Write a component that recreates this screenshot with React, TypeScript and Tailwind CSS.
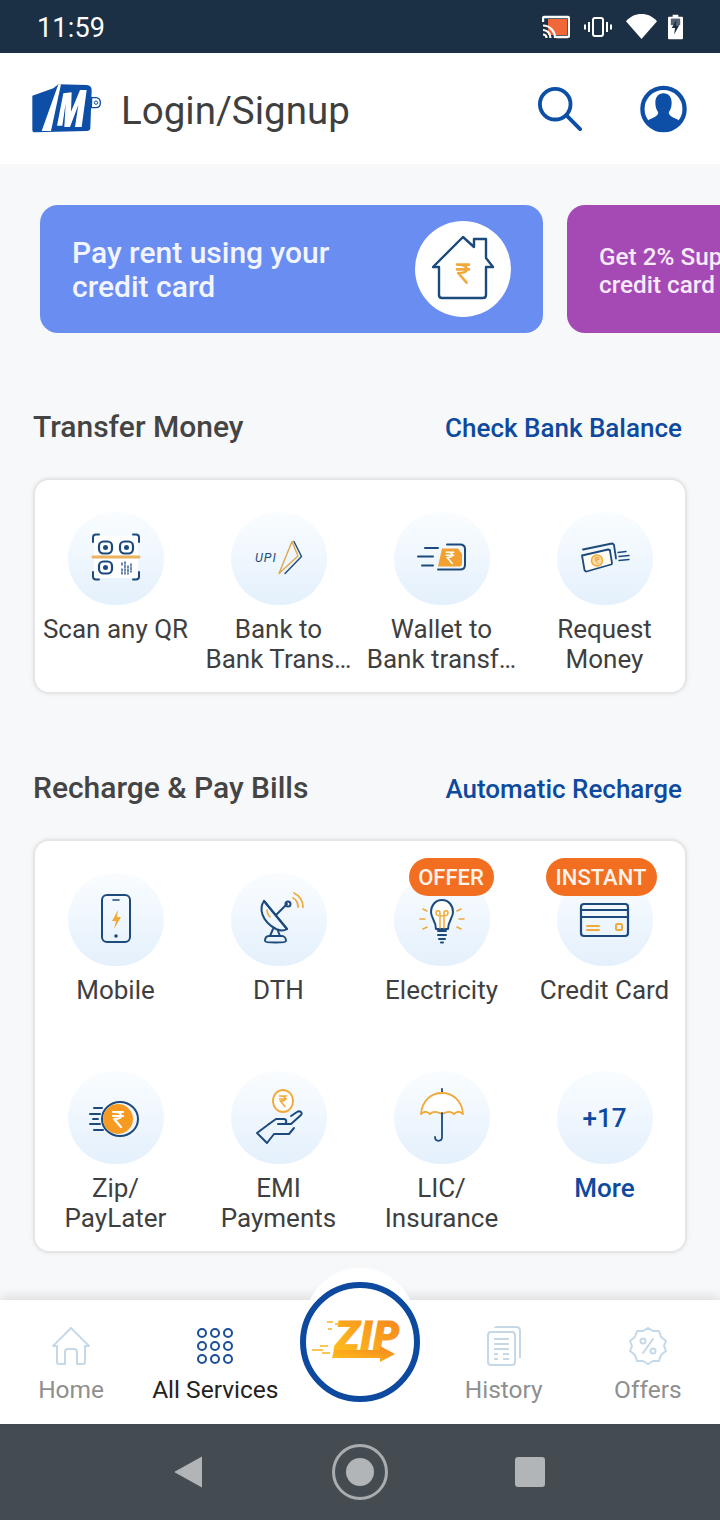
import type { ReactNode } from 'react';

const NAVY = '#1d4a7c';
const AMBER = '#f0a93a';

// Small rupee glyph drawn with strokes, used inside the service icons
function Rupee({ x, y, s = 1, color = AMBER, w = 2 }: { x: number; y: number; s?: number; color?: string; w?: number }) {
  return (
    <path
      transform={`translate(${x} ${y}) scale(${s})`}
      d="M-5 -7H5M-5 -3H5M-3 -7C2 -7 3 -5 3 -3C3 -1 1 0 -4 0L3 8"
      fill="none"
      stroke={color}
      strokeWidth={w / s}
      strokeLinecap="round"
      strokeLinejoin="round"
    />
  );
}

function StatusBar() {
  return (
    <div className="h-[53px] shrink-0 bg-[#1b2f45] flex items-center justify-between pl-[37px] pr-[36px]">
      <span className="pt-[3px] text-[27px] leading-none font-normal text-white tracking-[0.2px]">11:59</span>
      <div className="flex items-center">
        {/* cast */}
        <svg width="28" height="24" viewBox="0 0 28 24" fill="none">
          <rect x="6" y="4" width="19" height="16" fill="#f0683a" />
          <path d="M1 7V3.500C1 2.500 1.500 2 2.500 2H25.500C26.500 2 27 2.500 27 3.500V20.500C27 21.500 26.500 22 25.500 22H14" stroke="#fff" strokeWidth="2.400" />
          <path d="M1 10.500C7.500 10.500 13 16 13 23M1 15C5 15 8.500 18.500 8.500 23M1 19.500C3 19.500 4.500 21 4.500 23" stroke="#fff" strokeWidth="2.200" />
        </svg>
        {/* vibrate */}
        <svg className="ml-[14px]" width="28" height="20" viewBox="0 0 28 20" fill="none" stroke="#fff">
          <rect x="9" y="1" width="10" height="18" rx="2" strokeWidth="2" />
          <path d="M5 5V15M1 7.500V12.500M23 5V15M27 7.500V12.500" strokeWidth="2" />
        </svg>
        {/* wifi */}
        <svg className="ml-[14px]" width="31" height="25" viewBox="0 0 30 24">
          <path d="M0 7C4 2.500 9 0 15 0C21 0 26 2.500 30 7L15 24Z" fill="#fff" />
        </svg>
        {/* charging battery */}
        <svg className="ml-[11px] mr-[1px]" width="15" height="26" viewBox="0 0 16 26">
          <path d="M5 0H11V2H15C15.600 2 16 2.400 16 3V25C16 25.600 15.600 26 15 26H1C0.400 26 0 25.600 0 25V3C0 2.400 0.400 2 1 2H5Z" fill="#fff" />
          <path d="M3 4H13V11H3Z" fill="#1b2f45" opacity="0.75" />
          <path d="M9 5L4 14H7.500L6.500 21L12 11H8.500Z" fill="#1b2f45" />
        </svg>
      </div>
    </div>
  );
}

function Header() {
  return (
    <header className="h-[111px] shrink-0 bg-white flex items-center pl-[25px] pr-[33px]">
      <svg width="90" height="65" viewBox="0 0 270 195" className="-mt-[2px]">
        <path d="M22 62L85 40L100 28L185 30Q200 32 200 45L196 160Q195 168 185 168L30 172Q22 172 22 165Z" fill="#0d4ea6" />
        <path d="M50 168L100 28L108 28L78 168Z" fill="#fff" />
        <path d="M96 152L115 55L140 52L138 110L165 45L185 45L170 156L150 156L160 90L135 156L118 156L122 85L112 152Z" fill="#fff" />
        <path d="M200 68H214Q226 70 226 83Q226 98 212 98H199Z" fill="#fff" stroke="#0d4ea6" strokeWidth="4" />
        <circle cx="213" cy="83" r="5" fill="none" stroke="#0d4ea6" strokeWidth="3" />
      </svg>
      <span className="ml-[6px] mt-[5px] text-[38.500px] leading-none text-[#3f3f3f] font-normal">Login/Signup</span>
      <svg className="ml-auto" width="44" height="44" viewBox="0 0 46 46" fill="none" stroke="#0d4ea6" strokeLinecap="round">
        <ellipse cx="18" cy="18" rx="16" ry="16" strokeWidth="4" />
        <path d="M30 30L44 44" strokeWidth="4" />
      </svg>
      <svg className="ml-[58px]" width="47" height="48" viewBox="0 0 49 49">
        <circle cx="24.500" cy="24.500" r="22" fill="#fff" stroke="#0d4ea6" strokeWidth="4.500" />
        <path
          d="M24.500 8C30 8 33 12 33 18C33 22 32 25 30 28C30 31 33 33 38 35C41 36 41 37 40 38C36 43 30 46 24.500 46C19 46 13 43 9 38C8 37 8 36 11 35C16 33 19 31 19 28C17 25 16 22 16 18C16 12 19 8 24.500 8Z"
          fill="#0d4ea6"
        />
      </svg>
    </header>
  );
}

function Banners() {
  return (
    <div className="mt-[41px] flex gap-[24px] pl-[40px] overflow-hidden">
      <div className="w-[503px] h-[128px] shrink-0 rounded-[18px] bg-[#6a8df2] flex items-center justify-between pl-[32px] pr-[32px]">
        <p className="pt-[2px] text-[30px] leading-[34px] font-medium text-[#f2f5ff]">
          Pay rent using your
          <br />
          credit card
        </p>
        <div className="w-[96px] h-[96px] rounded-full bg-white flex items-center justify-center">
          <svg width="64" height="66" viewBox="0 -2 64 66" fill="none">
            <path
              d="M2 29L32 -1L43 9V1H55V20L62 29H55V57C55 59 54 60 52 60H11C9 60 8 59 8 57V29Z"
              stroke={NAVY}
              strokeWidth="2.400"
              strokeLinejoin="round"
            />
            <Rupee x={32} y={35} s={1.200} w={2.600} />
          </svg>
        </div>
      </div>
      <div className="w-[503px] h-[128px] shrink-0 rounded-[18px] bg-[#a549b4] flex items-center pl-[32px]">
        <p className="pt-[4px] text-[24.300px] leading-[28px] font-medium text-[#f7eafa] whitespace-nowrap">
          Get 2% Super Cash on
          <br />
          credit card
        </p>
      </div>
    </div>
  );
}

function SectionHead({ title, action, top }: { title: string; action: string; top: string }) {
  return (
    <div className={`${top} h-[40px] px-[33px] flex items-center justify-between`}>
      <h2 className="mt-[1px] text-[30px] leading-none font-medium text-[#444]">{title}</h2>
      <a className="text-[26px] leading-none font-medium text-[#0d4a9f] mt-[4px] mr-[5px]">{action}</a>
    </div>
  );
}

interface Service {
  label: ReactNode;
  icon: ReactNode;
  badge?: { text: string; pos: string };
  more?: boolean;
}

function IconBox({ children }: { children: ReactNode }) {
  return (
    <svg width="64" height="64" viewBox="0 0 64 64" fill="none" strokeLinecap="round" strokeLinejoin="round">
      {children}
    </svg>
  );
}

const transferServices: Service[] = [
  {
    label: 'Scan any QR',
    icon: (
      <IconBox>
        <rect x="10" y="9" width="44" height="42" fill="#fff" />
        <path d="M9 15V10.500C9 8.500 10 7.500 12 7.500H15M49 7.500H52C54 7.500 55 8.500 55 10.500V15M9 45V49.500C9 51.500 10 52.500 12 52.500H15M49 52.500H52C54 52.500 55 51.500 55 49.500V45" stroke={NAVY} strokeWidth="2" />
        <rect x="15" y="14.500" width="13" height="12" rx="4.500" stroke={NAVY} strokeWidth="2.200" />
        <rect x="36" y="14.500" width="13" height="12" rx="4.500" stroke={NAVY} strokeWidth="2.200" />
        <rect x="15" y="34.500" width="13" height="12" rx="4.500" stroke={NAVY} strokeWidth="2.200" />
        <circle cx="21.500" cy="20.500" r="2.500" fill={NAVY} />
        <circle cx="42.500" cy="20.500" r="2.500" fill={NAVY} />
        <circle cx="21.500" cy="40.500" r="2.500" fill={NAVY} />
        <path d="M9 30H55" stroke="#ecb45f" strokeWidth="3" />
        <path d="M38 36V38M41 35V47M44 39V47M47 37V45M38 42V47" stroke={NAVY} strokeWidth="1.300" strokeDasharray="2 1.500" />
      </IconBox>
    ),
  },
  {
    label: (
      <>
        Bank to
        <br />
        Bank Trans…
      </>
    ),
    icon: (
      <IconBox>
        <text x="8" y="35" fontFamily="Roboto, sans-serif" fontStyle="italic" fontSize="12.500" fontWeight="400" fill={NAVY} letterSpacing="1">
          UPI
        </text>
        <path d="M45 14.500L32 46.500L51 29Z" stroke="#e0a64f" strokeWidth="1.400" />
        <path d="M47 14.500L54.500 29.500L38 46.500" stroke={NAVY} strokeWidth="1.400" />
      </IconBox>
    ),
  },
  {
    label: (
      <>
        Wallet to
        <br />
        Bank transf…
      </>
    ),
    icon: (
      <IconBox>
        <path d="M37 17.500H50C53.500 17.500 55 19.500 55 22V38C55 41 53.500 42.500 50 42.500H28" stroke={NAVY} strokeWidth="2" />
        <path d="M32 21.500H48L52 27V36C52 38 51 39.500 49 39.500H28Z" fill="#f3a12e" />
        <Rupee x={40} y={30.500} s={0.750} color="#fff" w={1.600} />
        <path d="M15 21H28M8 29.500H23M12 38.500H23" stroke={NAVY} strokeWidth="2" />
      </IconBox>
    ),
  },
  {
    label: (
      <>
        Request
        <br />
        Money
      </>
    ),
    icon: (
      <IconBox>
        <path d="M10 22.500L39 16.500C40 16.500 40.500 17 41 18L43 31.500" stroke={NAVY} strokeWidth="1.800" />
        <path d="M9 28.500L35 22.500C36.500 22.500 37 23 37 24L39 36C39 37 38.500 37.500 38 37.500L13.500 44.500C12.500 44.500 12 44 11.500 43Z" fill="#fffdf3" stroke={NAVY} strokeWidth="1.800" />
        <circle cx="24" cy="33.500" r="5.500" fill="#f9dda8" stroke={AMBER} strokeWidth="1.400" />
        <Rupee x={24} y={33.500} s={0.400} w={1} />
        <path d="M45 25.500L53 24.500M46 29.500L56 28.500M46 33.500L56 32.500" stroke={NAVY} strokeWidth="1.400" />
      </IconBox>
    ),
  },
];

const billServices: Service[] = [
  {
    label: 'Mobile',
    icon: (
      <IconBox>
        <rect x="18" y="7" width="28" height="47" rx="5" stroke={NAVY} strokeWidth="2" />
        <path d="M29 12H35" stroke={NAVY} strokeWidth="1.600" />
        <circle cx="32" cy="48" r="1.800" fill={NAVY} />
        <path d="M34 22L28 33H32L30 41L37 29H33Z" fill={AMBER} />
      </IconBox>
    ),
  },
  {
    label: 'DTH',
    icon: (
      <IconBox>
        <path d="M17 13C12 20 14 33 29 41C33 43 37 43 40 41Z" stroke={NAVY} strokeWidth="2" />
        <path d="M17 13L40 41" stroke={NAVY} strokeWidth="2" />
        <path d="M29 27L40 16" stroke={NAVY} strokeWidth="2" />
        <circle cx="41" cy="16" r="2.500" stroke={NAVY} strokeWidth="2" />
        <path d="M46 10C50 12 51 15 51 19M47 5C53 8 56 13 56 19" stroke={AMBER} strokeWidth="1.800" />
        <path d="M26 41L23 48H33L31 43M18 53C18 50 19 48 22 48H35C37 48 39 50 39 53C39 55 18 55 18 53Z" stroke={NAVY} strokeWidth="2" />
        <path d="M20 22C20 25 21 27 23 29" stroke={AMBER} strokeWidth="1.500" />
      </IconBox>
    ),
  },
  {
    label: 'Electricity',
    badge: { text: 'OFFER', pos: 'left-[15px] w-[85px]' },
    icon: (
      <IconBox>
        <path d="M32 12C25 12 21 18 21 24C21 30 26 33 26 41H38C38 33 43 30 43 24C43 18 39 12 32 12Z" fill="#fff" stroke={NAVY} strokeWidth="2" />
        <path d="M28 43H36M28 47H36M29 51H35M31 54.500H33" stroke={NAVY} strokeWidth="2" />
        <path d="M30 40V25C30 22 26 22 26 25C26 27 28 28 32 28C36 28 38 27 38 25C38 22 34 22 34 25V40" stroke={AMBER} strokeWidth="1.500" />
        <path d="M13 21L17 23M10 31H15M13 41L17 39M51 21L47 23M54 31H49M51 41L47 39" stroke={AMBER} strokeWidth="1.600" />
      </IconBox>
    ),
  },
  {
    label: 'Credit Card',
    badge: { text: 'INSTANT', pos: '-left-[11px] w-[111px]' },
    icon: (
      <IconBox>
        <rect x="8" y="16" width="47" height="32" rx="3" stroke={NAVY} strokeWidth="2.200" />
        <path d="M8 22H55M8 29H55" stroke={NAVY} strokeWidth="2.200" />
        <path d="M14 38H26M14 42H26" stroke={AMBER} strokeWidth="1.800" />
        <rect x="43" y="36" width="6" height="6" rx="1.500" stroke={AMBER} strokeWidth="2" />
      </IconBox>
    ),
  },
  {
    label: (
      <>
        Zip/
        <br />
        PayLater
      </>
    ),
    icon: (
      <IconBox>
        <ellipse cx="36" cy="33" rx="18" ry="17" stroke={NAVY} strokeWidth="2" />
        <circle cx="34" cy="33" r="15" fill="#f79a22" />
        <Rupee x={34} y={33} s={1} color="#fff" w={2.200} />
        <path d="M10 22H18M6 28H16M9 33H14M6 38H16M10 44H19" stroke={NAVY} strokeWidth="2" />
      </IconBox>
    ),
  },
  {
    label: (
      <>
        EMI
        <br />
        Payments
      </>
    ),
    icon: (
      <IconBox>
        <ellipse cx="36" cy="15" rx="10" ry="11" fill="#fff" stroke={AMBER} strokeWidth="1.800" />
        <Rupee x={36} y={15} s={0.700} w={1.500} />
        <path d="M22 38L29 33H37C40 33 40 38 37 38H31M37 38H44L54 29C56 27 53 24 50 26L44 30" stroke={NAVY} strokeWidth="2" />
        <path d="M22 38L10 47L20 57L27 48H42L47 42" stroke={NAVY} strokeWidth="2" />
      </IconBox>
    ),
  },
  {
    label: (
      <>
        LIC/
        <br />
        Insurance
      </>
    ),
    icon: (
      <IconBox>
        <path d="M32 3V7" stroke={NAVY} strokeWidth="1.800" />
        <path d="M11 28C12 15 21 7 32 7C43 7 52 15 53 28C50 25 47 25 44 28C41 25 38 25 32 28C26 25 23 25 20 28C17 25 14 25 11 28Z" fill="#fff" stroke={AMBER} strokeWidth="1.800" />
        <path d="M32 27V51C32 56 25 56 25 51" stroke={NAVY} strokeWidth="1.800" />
      </IconBox>
    ),
  },
  {
    label: 'More',
    more: true,
    icon: <span className="text-[26px] leading-none font-medium text-[#0d4a9f]">+17</span>,
  },
];

function ServiceCell({ service }: { service: Service }) {
  return (
    <div className="flex flex-col items-center">
      <div className="relative w-[96px] h-[93px] rounded-full bg-gradient-to-b from-[#fafdff] to-[#e4f0fc] flex items-center justify-center">
        {service.icon}
        {service.badge && (
          <span className={`absolute -top-[15px] ${service.badge.pos} h-[38px] pt-[2px] rounded-full bg-[#f26f21] flex items-center justify-center text-[22px] leading-none font-medium text-[#fdf3ea]`}>
            {service.badge.text}
          </span>
        )}
      </div>
      <div className={`mt-[9px] text-center text-[26px] leading-[30px] whitespace-nowrap ${service.more ? 'font-medium text-[#0d4a9f]' : 'text-[#3f3f3f]'}`}>
        {service.label}
      </div>
    </div>
  );
}

function ServiceCard({ services, top, rowClass }: { services: Service[]; top: string; rowClass: string }) {
  return (
    <div className={`${top} mx-[33px] rounded-[16px] border-2 border-[#e6e6e6] bg-white pt-[32px] pb-[18px] shadow-[0_0_4px_rgba(0,0,0,0.08)]`}>
      <div className={`-ml-[1px] grid grid-cols-[repeat(4,163px)] ${rowClass}`}>
        {services.map((service, i) => (
          <ServiceCell key={i} service={service} />
        ))}
      </div>
    </div>
  );
}

function NavItem({ label, active, children }: { label: string; active?: boolean; children: ReactNode }) {
  return (
    <div className="flex flex-col items-center pt-[26px]">
      <div className="h-[40px] flex items-center justify-center">{children}</div>
      <span className={`mt-[10px] text-[24.500px] leading-[28px] whitespace-nowrap ${active ? 'text-[#222]' : 'text-[#8f8f8f]'}`}>{label}</span>
    </div>
  );
}

const PALE = '#c5d8e8';

function ZipButton() {
  return (
    <div className="absolute left-[300px] -top-[18px] w-[120px] h-[120px] rounded-full bg-white border-[6px] border-[#0d4a9f] flex items-center justify-center">
      <svg width="96" height="52" viewBox="0 0 96 52" className="overflow-visible">
        <defs>
          <linearGradient id="zipFill" x1="0" y1="1" x2="1" y2="0">
            <stop offset="0" stopColor="#ffc21a" />
            <stop offset="1" stopColor="#f5841f" />
          </linearGradient>
        </defs>
        <text x="23" y="34" fontFamily="Roboto, sans-serif" fontStyle="italic" fontWeight="900" fontSize="41" letterSpacing="1" fill="url(#zipFill)" stroke="url(#zipFill)" strokeWidth="1">
          ZIP
        </text>
        <path d="M22 34H68V30L83 38L68 46V42H20Z" fill="url(#zipFill)" />
        <path d="M15 6H21M23 8H28M16 13H20M8 30H16M0 34H11M10 37H18" stroke="#f5b21f" strokeWidth="1.600" />
      </svg>
    </div>
  );
}

function BottomNav() {
  const dots = Array.from({ length: 9 });
  return (
    <nav className="relative h-[124px] shrink-0 bg-white shadow-[0_-4px_10px_rgba(0,0,0,0.1)]">
      {/* raised white notch behind the Zip button */}
      <div className="absolute left-[305px] -top-[32px] w-[110px] h-[110px] rounded-full bg-white" />
      <div className="relative grid grid-cols-5 h-full -ml-[1px]">
        <NavItem label="Home">
          <svg width="38" height="38" viewBox="0 0 38 38" fill="none" stroke={PALE} strokeWidth="2" strokeLinejoin="round">
            <path d="M1 19L19 1L37 19H33V35C33 36 32 37 31 37H25V25C25 23 24 22 22 22H16C14 22 13 23 13 25V37H7C6 37 5 36 5 35V19Z" />
          </svg>
        </NavItem>
        <NavItem label="All Services" active>
          <div className="grid grid-cols-3 gap-[3px]">
            {dots.map((_, i) => (
              <span key={i} className="w-[10px] h-[10px] rounded-full border-[2.500px] border-[#1b4f97]" />
            ))}
          </div>
        </NavItem>
        <div />
        <NavItem label="History">
          <svg width="34" height="40" viewBox="0 0 34 40" fill="none" stroke={PALE} strokeWidth="2">
            <path d="M8 2C8 1 9 1 10 1H29C32 1 33 2 33 5V32" />
            <rect x="1" y="6" width="27" height="33" rx="3" />
            <path d="M7 13H22M7 18H22M7 23H22M7 28H11M16 28H22M7 33H11M16 33H22" />
          </svg>
        </NavItem>
        <NavItem label="Offers">
          <svg width="38" height="38" viewBox="0 0 38 38" fill="none" stroke={PALE} strokeWidth="2" strokeLinejoin="round">
            <path d="M19 1L24 4L30 4L32 10L37 14L35 19L37 24L32 28L30 34L24 34L19 37L14 34L8 34L6 28L1 24L3 19L1 14L6 10L8 4L14 4Z" />
            <path d="M24 12L14 26" strokeLinecap="round" />
            <circle cx="14" cy="14" r="2.500" />
            <circle cx="24" cy="24" r="2.500" />
          </svg>
        </NavItem>
      </div>
      <ZipButton />
    </nav>
  );
}

function SystemNav() {
  return (
    <div className="h-[96px] shrink-0 bg-[#444c52] flex items-center justify-center pr-[2px]">
      <svg width="28" height="32" viewBox="0 0 28 32" className="mr-[130px]">
        <path d="M28 1V31L1 16Z" fill="#b1b5b7" stroke="#b1b5b7" strokeLinejoin="round" />
      </svg>
      <div className="w-[56px] h-[56px] rounded-full border-[3px] border-[#a9adaf] flex items-center justify-center">
        <span className="w-[28px] h-[28px] rounded-full bg-[#b1b5b7]" />
      </div>
      <span className="ml-[127px] w-[30px] h-[30px] rounded-[3px] bg-[#b1b5b7]" />
    </div>
  );
}

export default function App() {
  return (
    <div className="w-[720px] h-[1520px] flex flex-col bg-[#f7f8f9] overflow-hidden font-['Roboto',sans-serif]">
      <StatusBar />
      <Header />
      <main className="flex-1 min-h-0 overflow-hidden">
        <Banners />
        <SectionHead title="Transfer Money" action="Check Bank Balance" top="mt-[73px]" />
        <ServiceCard services={transferServices} top="mt-[32px]" rowClass="" />
        <SectionHead title="Recharge & Pay Bills" action="Automatic Recharge" top="mt-[73px]" />
        <ServiceCard services={billServices} top="mt-[32px]" rowClass="grid-rows-[161px_auto] gap-y-[37px]" />
      </main>
      <BottomNav />
      <SystemNav />
    </div>
  );
}
